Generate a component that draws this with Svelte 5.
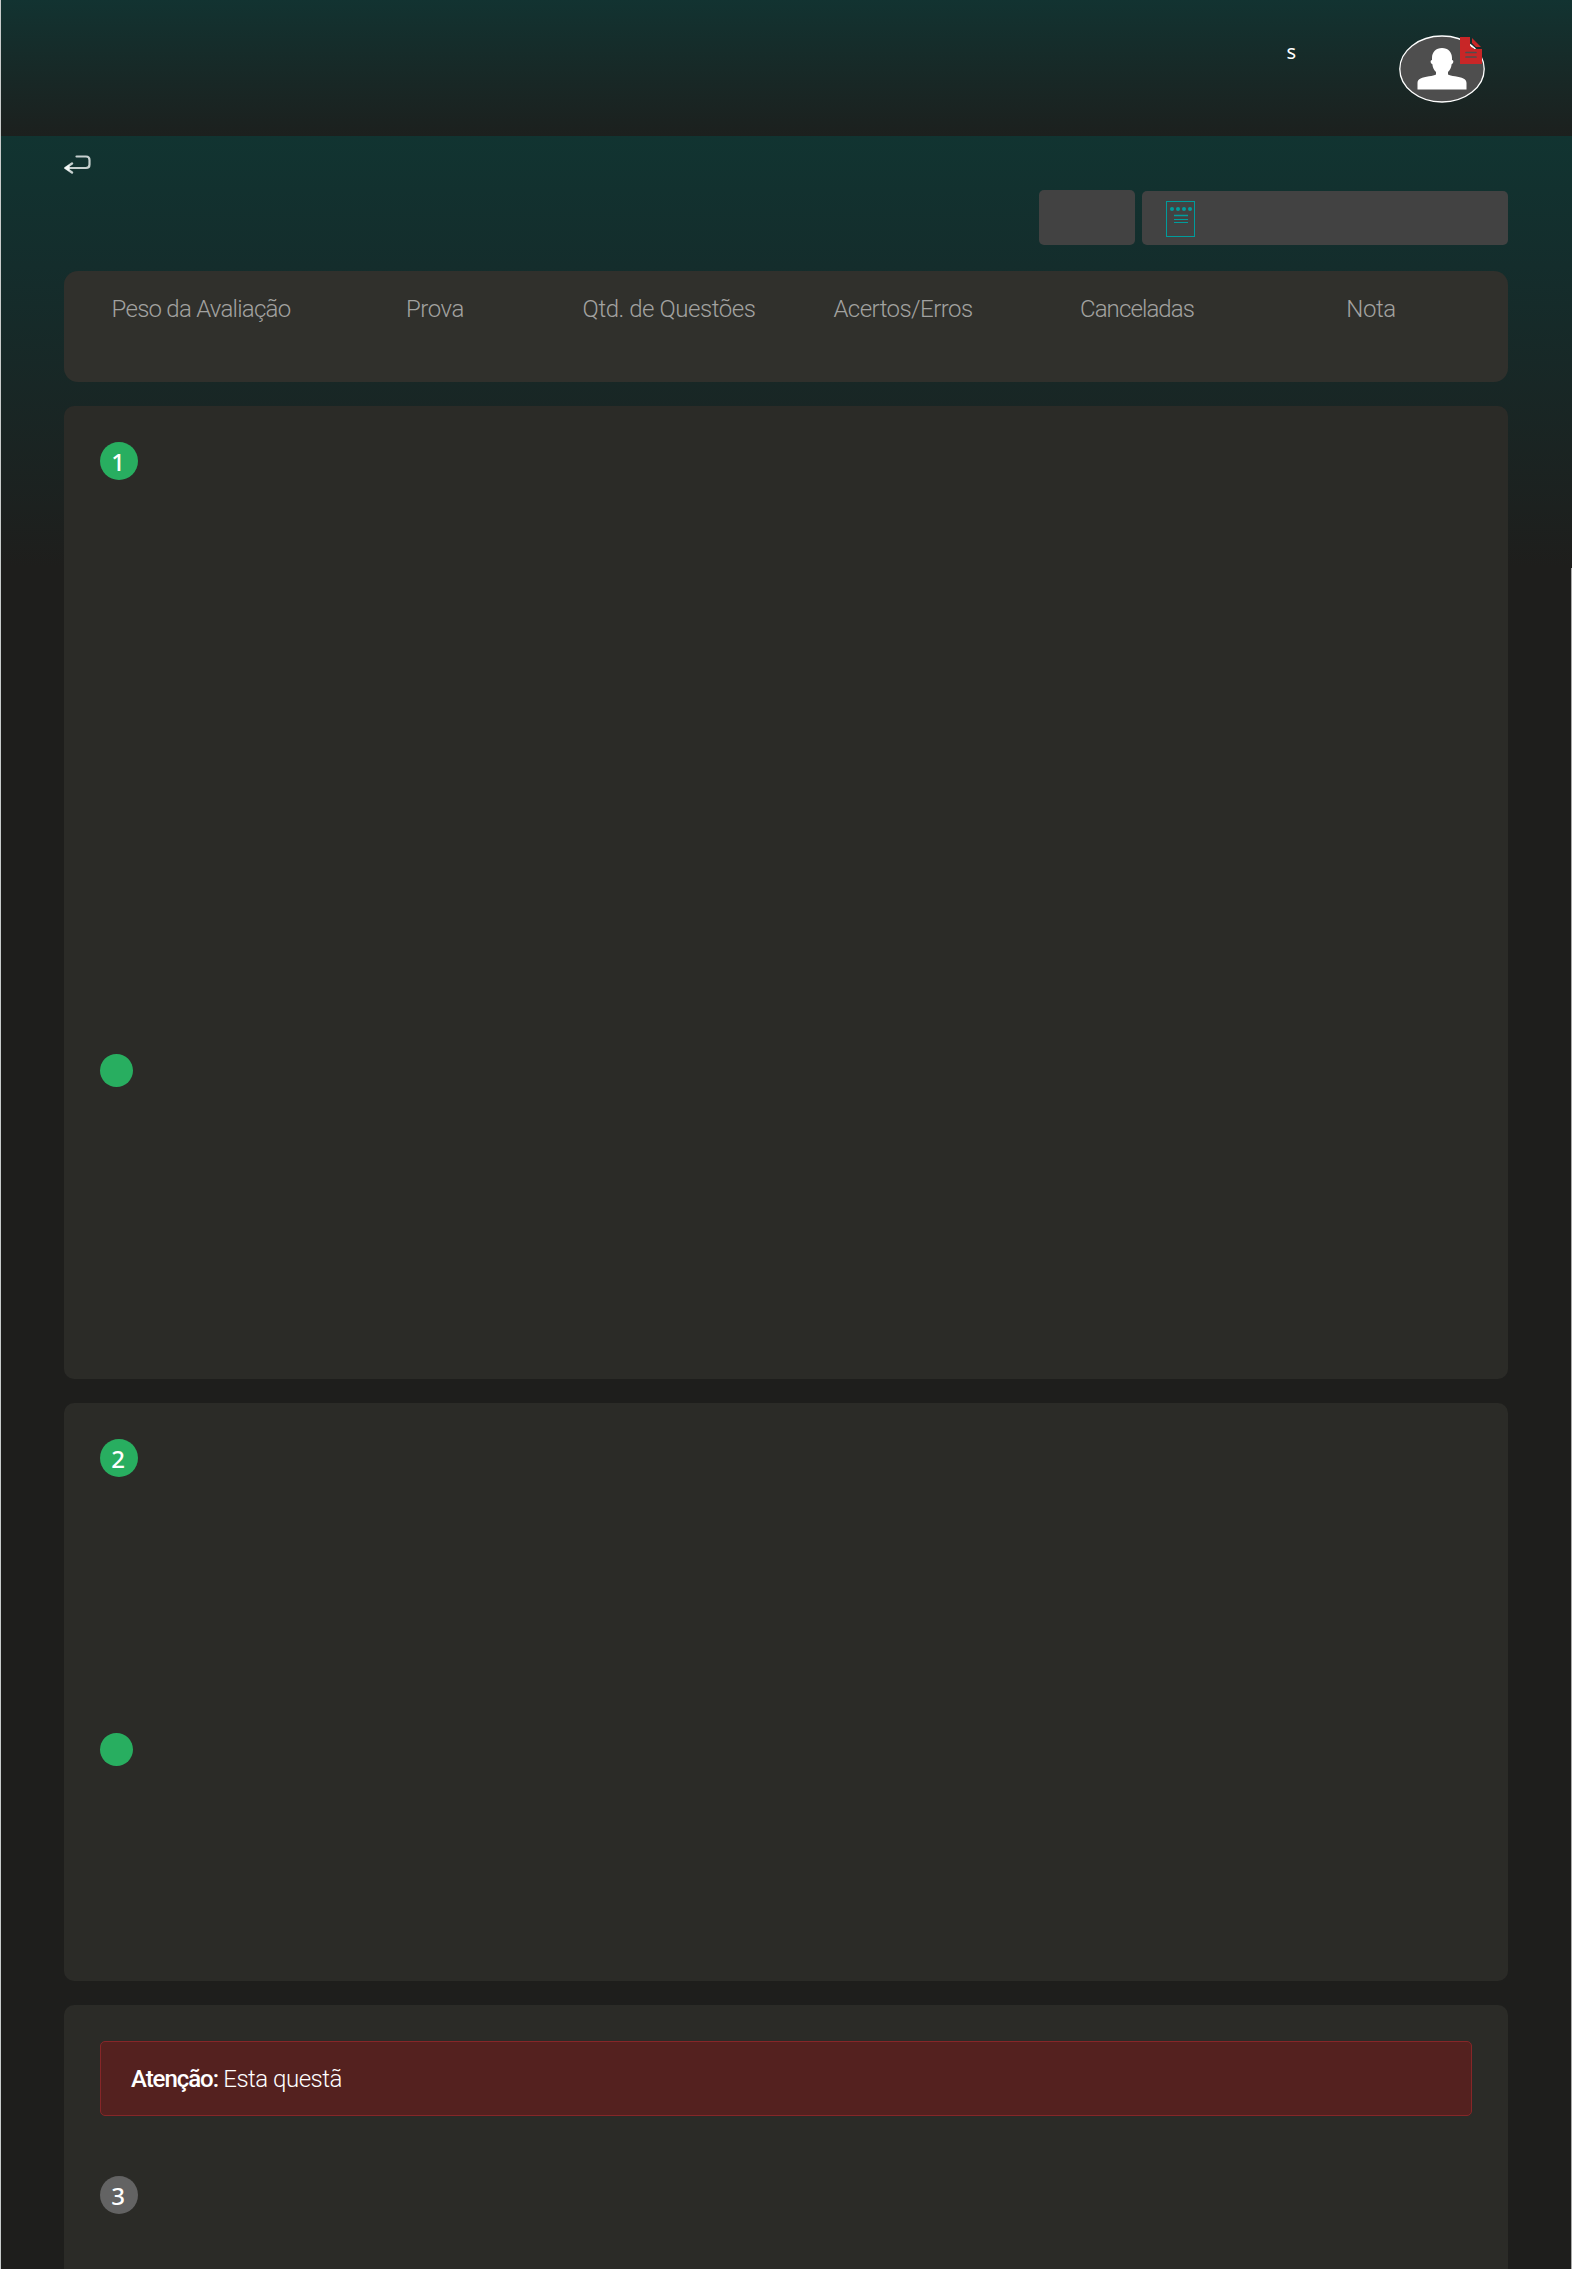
<script lang="ts">
  const columns = [
    { label: 'Peso da Avaliação', spacing: -0.75 },
    { label: 'Prova', spacing: -0.45 },
    { label: 'Qtd. de Questões', spacing: -0.45 },
    { label: 'Acertos/Erros', spacing: -0.55 },
    { label: 'Canceladas', spacing: -0.9 },
    { label: 'Nota', spacing: -0.4 },
  ];

  type Question = { number: number; height: number; dotGap?: number; cancelled?: boolean };

  const questions: Question[] = [
    { number: 1, height: 973, dotGap: 574 },
    { number: 2, height: 578, dotGap: 256 },
    { number: 3, height: 300, cancelled: true },
  ];
</script>

<div class="page">
  <header class="topbar">
    <span class="user-name">s</span>
    <div class="avatar">
      <svg class="avatar-picture" viewBox="0 0 86 68" width="86" height="68" aria-hidden="true">
        <ellipse cx="43" cy="34" rx="42.2" ry="33" fill="#4e4e4e" stroke="#fff" stroke-width="1.3" />
        <path
          fill="#fff"
          d="M43 13c-6 0-10 4-10 10v2c-2 0-1.700 3.500.3 4 .5 4 1.700 6 3.700 8v2.500c-1 .8-4 1.300-7 1.800C23 42.300 18.500 44 18.500 48v6.500h49V48c0-4-4.500-5.700-11.500-6.700-3-.5-6-1-7-1.800V37c2-2 3.200-4 3.700-8 2-.5 2.300-4 .3-4v-2c0-6-4-10-10-10z"
        />
      </svg>
      <svg class="avatar-badge" viewBox="0 0 22 27" width="22" height="27" aria-hidden="true">
        <path fill="#c82627" d="M0 0h10v8l4 4h8v15H0z" />
        <path fill="#c82627" d="M12 1l9 9h-5l-4-4z" />
        <path fill="none" stroke="#fff" stroke-width="1.200" d="M10.500 8q1 2.500 4 3" />
        <path stroke="#4e4e4e" stroke-width="1.700" stroke-linecap="round" d="M6 15.500h10M6 20h10" />
      </svg>
    </div>
  </header>

  <main class="content">
    <a class="back" href="#voltar" aria-label="Voltar">
      <svg viewBox="0 0 28 20" width="28" height="20" aria-hidden="true">
        <g fill="none" stroke="#c6d0cf" stroke-width="2.400" stroke-linecap="round" stroke-linejoin="round">
          <path stroke-width="2.200" d="M12.500 2.500H22q3.500 0 3.500 3.500v4.500q0 3.500-3.500 3.500H2" />
          <path d="M8 9.500L1.500 14 8 18.500" />
        </g>
        <path fill="#f4f7f6" d="M0 14l5.500-3.500v7z" />
      </svg>
    </a>

    <div class="actions">
      <button type="button" class="action action--small" aria-label="Imprimir"></button>
      <button type="button" class="action action--wide" aria-label="Gabarito">
        <svg viewBox="0 0 30 38" width="30" height="38" aria-hidden="true">
          <g fill="none" stroke="#009c9c">
            <rect x="0.500" y="2.500" width="28" height="35" />
            <path stroke-width="1.500" d="M8 16.500h14" />
            <path d="M8 20.500h14M8 23.500h14" />
          </g>
          <g fill="#009c9c">
            {#each [6, 12, 18, 24] as cx}
              <circle {cx} cy="10" r="2" />
            {/each}
          </g>
        </svg>
      </button>
    </div>

    <section class="summary">
      {#each columns as { label, spacing }}
        <span class="summary-label" style="letter-spacing: {spacing}px">{label}</span>
      {/each}
    </section>

    {#each questions as q (q.number)}
      <article class="question" style="height: {q.height}px">
        {#if q.cancelled}
          <div class="alert"><strong>Atenção:</strong>&nbsp;<span>Esta questã</span></div>
        {/if}
        <div class="number" class:number--muted={q.cancelled}><span>{q.number}</span></div>
        {#if q.dotGap}
          <div class="dot" style="margin-top: {q.dotGap}px"></div>
        {/if}
      </article>
    {/each}
  </main>
</div>

<style>
  :global(body) {
    margin: 0;
    background: #1e1e1c;
  }
  .page {
    position: relative;
    box-sizing: border-box;
    height: 2269px;
    overflow: hidden;
    border-left: 1px solid #c8cccb;
    font-family: Roboto, 'Liberation Sans', sans-serif;
    font-weight: 300;
    background: #1e1e1c;
  }
  /* light hairline along the lower right edge */
  .page::after {
    content: '';
    position: absolute;
    top: 568px;
    right: 0;
    bottom: 0;
    width: 1px;
    background: #a9a9a8;
  }
  .topbar {
    box-sizing: border-box;
    display: flex;
    align-items: flex-start;
    justify-content: flex-end;
    height: 136px;
    padding: 35px 87px 0 0;
    background: linear-gradient(#123331, #1c201e);
  }
  .user-name {
    margin: 5px 103px 0 0;
    color: #fff;
    font-family: 'Noto Sans', sans-serif;
    font-size: 20px;
    font-weight: 400;
    line-height: 24px;
  }
  .avatar {
    position: relative;
    height: 68px;
  }
  .avatar-picture { display: block; }
  .avatar-badge {
    position: absolute;
    top: 2px;
    right: 3px;
  }
  .content {
    box-sizing: border-box;
    height: 2133px;
    padding: 18px 64px 0 63px;
    background: linear-gradient(#113431, #142d2c 130px, #1e1e1c 430px);
  }
  .back {
    display: block;
    width: 28px;
    height: 20px;
  }
  .back svg { display: block; }
  .actions {
    display: flex;
    align-items: flex-end;
    justify-content: flex-end;
    gap: 7px;
    height: 55px;
    margin-top: 16px;
  }
  .action {
    box-sizing: border-box;
    display: flex;
    align-items: center;
    padding: 0;
    border: none;
    border-radius: 5px;
    background: #424242;
  }
  .action--small {
    width: 96px;
    height: 55px;
  }
  .action--wide {
    width: 366px;
    height: 54px;
    padding-left: 24px;
  }
  .summary {
    box-sizing: border-box;
    display: grid;
    grid-template-columns: repeat(6, 1fr);
    height: 111px;
    margin: 26px 0 24px;
    padding: 22px 20px 0;
    border-radius: 14px;
    background: #30302c;
  }
  .summary-label {
    color: #a2a2a0;
    font-size: 24px;
    line-height: 32px;
    text-align: center;
    white-space: nowrap;
  }
  .question {
    box-sizing: border-box;
    margin-bottom: 24px;
    padding: 36px 36px 0;
    border-radius: 10px;
    background: #2b2b27;
  }
  .number {
    display: flex;
    align-items: center;
    justify-content: center;
    width: 38px;
    height: 38px;
    border-radius: 50%;
    background: #28ae60;
    color: #fff;
    font-family: 'Noto Sans', sans-serif;
    font-size: 24px;
    font-weight: 500;
    line-height: 32px;
  }
  .number span { margin: 1px 2px 0 0; }
  .number--muted { background: #636363; }
  .dot {
    width: 33px;
    height: 33px;
    border-radius: 50%;
    background: #28ae60;
  }
  .alert {
    box-sizing: border-box;
    display: flex;
    align-items: center;
    height: 75px;
    margin-bottom: 60px;
    padding-left: 30px;
    border: 1px solid #862628;
    border-radius: 5px;
    background: #54211f;
    color: #fff;
    font-size: 24px;
    letter-spacing: -0.5px;
  }
  .alert strong {
    font-weight: 500;
    letter-spacing: -1.05px;
  }
</style>
